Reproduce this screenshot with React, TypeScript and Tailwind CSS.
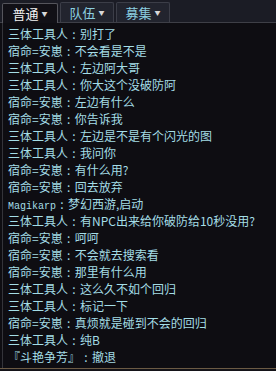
import React from 'react';

const lines: [string, string][] = [
  ['三体工具人', '别打了'],
  ['宿命=安崽', '不会看是不是'],
  ['三体工具人', '左边阿大哥'],
  ['三体工具人', '你大这个没破防阿'],
  ['宿命=安崽', '左边有什么'],
  ['宿命=安崽', '你告诉我'],
  ['三体工具人', '左边是不是有个闪光的图'],
  ['三体工具人', '我问你'],
  ['宿命=安崽', '有什么用?'],
  ['宿命=安崽', '回去放弃'],
  ['Magikarp', '梦幻西游,启动'],
  ['三体工具人', '有NPC出来给你破防给10秒没用?'],
  ['宿命=安崽', '呵呵'],
  ['宿命=安崽', '不会就去搜索看'],
  ['宿命=安崽', '那里有什么用'],
  ['三体工具人', '这么久不如个回归'],
  ['三体工具人', '标记一下'],
  ['宿命=安崽', '真烦就是碰到不会的回归'],
  ['三体工具人', '纯B'],
  ['『斗艳争芳』', '撤退'],
];

const tabs = ['普通', '队伍', '募集'];

export default function App() {
  return (
    <div
      className="w-[276px] h-[371px] bg-[#0e0d12] flex flex-col overflow-hidden"
      style={{ fontFamily: '"Noto Sans CJK SC", "Noto Sans", sans-serif' }}
    >
      <div className="h-[23px] bg-[#1b1c25] flex items-end gap-[2px] pl-[2px] border-b border-[#3e3f47]">
        {tabs.map((t, i) => (
          <div
            key={t}
            className={
              i === 0
                ? 'w-[56px] h-[20px] -mb-px flex items-center justify-center gap-[3px] bg-[#111016] border border-b-0 border-[#55555c] rounded-t-[2px] text-[13px] text-[#f4f4f4]'
                : 'w-[54px] h-[20px] flex items-center justify-center gap-[3px] bg-[#22242e] border border-b-0 border-[#3c3e48] rounded-t-[2px] text-[13px] text-[#8ccfe0]'
            }
          >
            <span>{t}</span>
            <span className="text-[6px] text-[#d8d8d8] leading-none">▼</span>
          </div>
        ))}
      </div>
      <div className="flex-1 border-l border-[#34343a] ml-[2px] pl-[5px] pt-[2px] flex flex-col">
        {lines.map(([name, msg], i) => (
          <div key={i} className="h-[17px] leading-[17px] text-[12px] text-[#a4dde6] whitespace-nowrap">
            {name === 'Magikarp' ? (
              <span className="text-[10px]" style={{ fontFamily: '"Liberation Mono", monospace' }}>
                {name}
              </span>
            ) : (
              <span>{name}</span>
            )}
            <span className="inline-block w-[12px] text-center">:</span>
            <span>{msg}</span>
          </div>
        ))}
      </div>
      <div className="h-[3px] border-t border-[#6b5a44] bg-[#141318]" />
    </div>
  );
}
